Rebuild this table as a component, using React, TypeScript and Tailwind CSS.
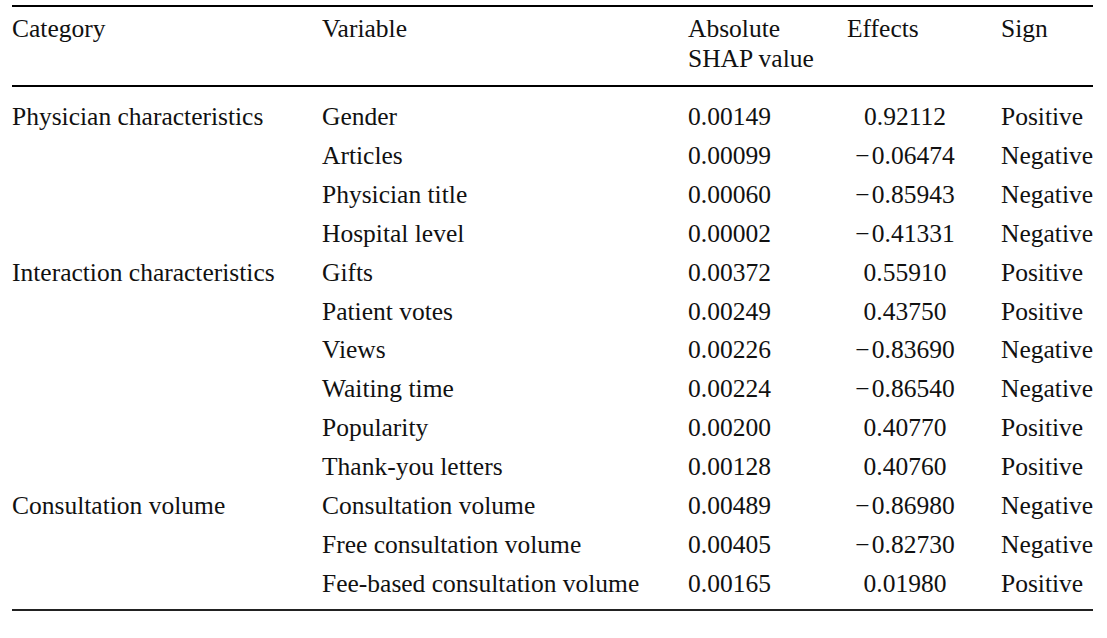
const rows = [
  { category: "Physician characteristics", variable: "Gender", shap: "0.00149", effect: "0.92112", sign: "Positive" },
  { category: "", variable: "Articles", shap: "0.00099", effect: "−0.06474", sign: "Negative" },
  { category: "", variable: "Physician title", shap: "0.00060", effect: "−0.85943", sign: "Negative" },
  { category: "", variable: "Hospital level", shap: "0.00002", effect: "−0.41331", sign: "Negative" },
  { category: "Interaction characteristics", variable: "Gifts", shap: "0.00372", effect: "0.55910", sign: "Positive" },
  { category: "", variable: "Patient votes", shap: "0.00249", effect: "0.43750", sign: "Positive" },
  { category: "", variable: "Views", shap: "0.00226", effect: "−0.83690", sign: "Negative" },
  { category: "", variable: "Waiting time", shap: "0.00224", effect: "−0.86540", sign: "Negative" },
  { category: "", variable: "Popularity", shap: "0.00200", effect: "0.40770", sign: "Positive" },
  { category: "", variable: "Thank-you letters", shap: "0.00128", effect: "0.40760", sign: "Positive" },
  { category: "Consultation volume", variable: "Consultation volume", shap: "0.00489", effect: "−0.86980", sign: "Negative" },
  { category: "", variable: "Free consultation volume", shap: "0.00405", effect: "−0.82730", sign: "Negative" },
  { category: "", variable: "Fee-based consultation volume", shap: "0.00165", effect: "0.01980", sign: "Positive" },
];

const cols = "grid grid-cols-[310px_366px_159px_154px_92px]";

function Effect({ value }: { value: string }) {
  if (value.startsWith("−")) {
    return (
      <span>
        <span className="mr-[2px]">−</span>
        {value.slice(1)}
      </span>
    );
  }
  return <span>{value}</span>;
}

export default function App() {
  return (
    <div className="w-[1107px] h-[638px] bg-white pt-[5px] text-[25.5px] text-[#111] font-['Liberation_Serif','Times_New_Roman',serif]">
      <div className="ml-[12px] w-[1081px]">
        <div className={`${cols} border-t-2 border-b-2 border-black pt-[7px] pb-[12px] leading-[29.5px]`}>
          <div>Category</div>
          <div>Variable</div>
          <div>
            Absolute
            <br />
            SHAP value
          </div>
          <div>Effects</div>
          <div>Sign</div>
        </div>
        <div className="pt-[11px] pb-[5px] border-b-2 border-[#222] leading-[38.9px]">
          {rows.map((r) => (
            <div key={r.variable} className={cols}>
              <div>{r.category}</div>
              <div>{r.variable}</div>
              <div>{r.shap}</div>
              <div className="text-center pr-[38px]">
                <Effect value={r.effect} />
              </div>
              <div>{r.sign}</div>
            </div>
          ))}
        </div>
      </div>
    </div>
  );
}
